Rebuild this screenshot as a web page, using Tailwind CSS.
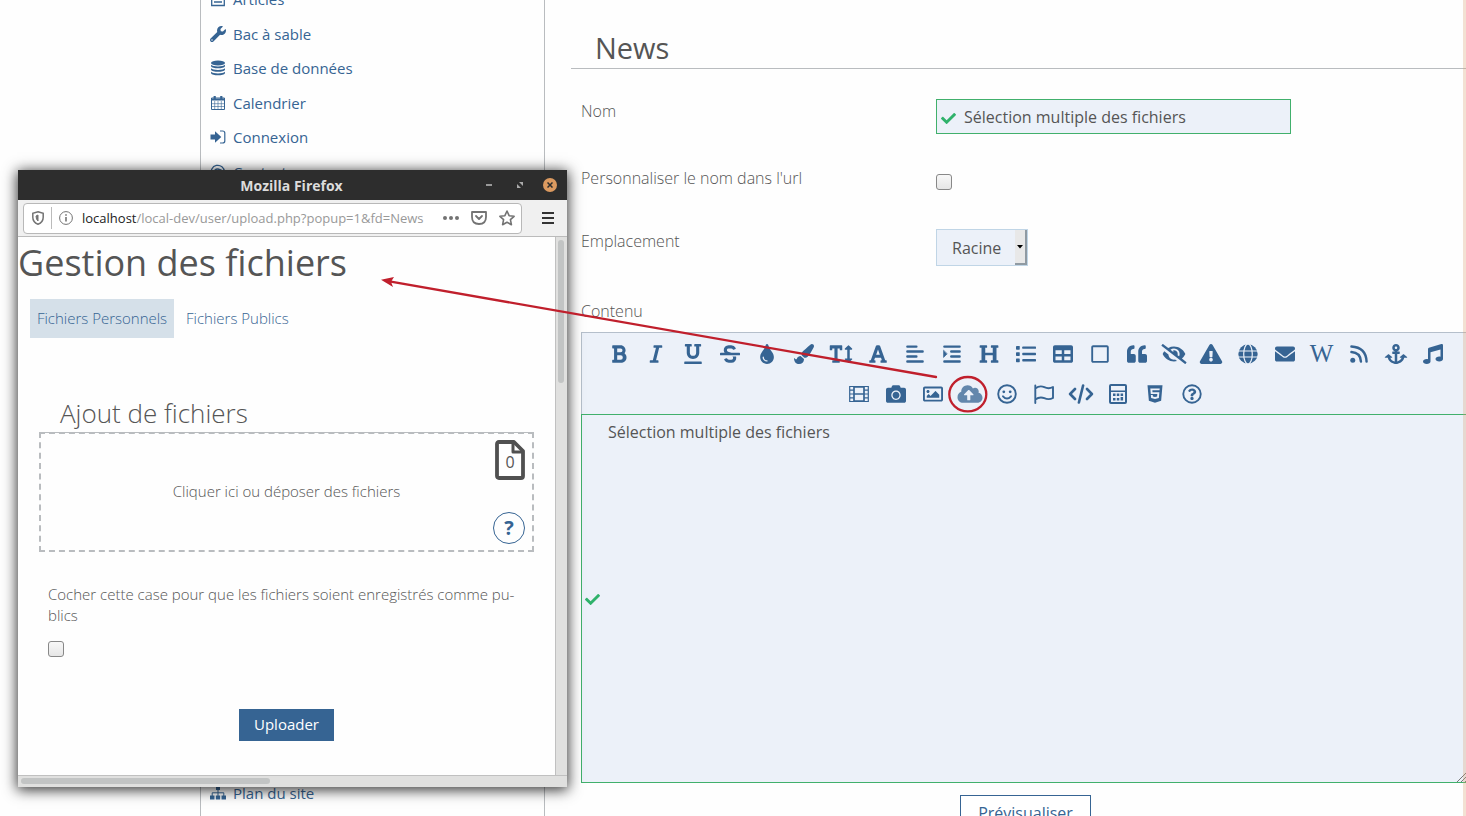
<!DOCTYPE html>
<html lang="fr">
<head>
<meta charset="utf-8">
<title>News</title>
<script src="https://cdn.jsdelivr.net/npm/@tailwindcss/browser@4"></script>
</head>
<body class="relative h-screen overflow-hidden bg-[#fefefe] font-['Open_Sans',sans-serif] text-[#555]">
<div class="flex h-full">
  <!-- Side menu -->
  <aside class="ml-[200px] flex w-[345px] shrink-0 flex-col justify-between border-x border-[#b9bcbf] text-[15px] text-[#366493]">
    <nav class="-mt-[18px] flex h-[207px] flex-col pl-[9px]">
      <a href="#" class="flex flex-1 items-center gap-[7px]"><svg class="size-4" viewBox="0 0 16 16" fill="none" stroke="currentColor" stroke-width="1.3"><path d="M1.7 1.5h12.6v13H1.7zM4 5h8M4 8h8M4 11h8"/></svg>Articles</a>
      <a href="#" class="flex flex-1 items-center gap-[7px]"><svg class="size-4" viewBox="0 0 512 512" fill="currentColor"><path d="M507.730 109.100c-2.240-9.030-13.540-12.090-20.120-5.510l-74.360 74.360-67.880-11.310-11.310-67.880 74.360-74.360c6.620-6.620 3.430-17.900-5.660-20.160-47.380-11.740-99.550.91-136.580 37.930-39.640 39.640-50.550 97.100-34.050 147.200L18.740 402.760c-24.990 24.990-24.990 65.510 0 90.500 24.990 24.990 65.510 24.990 90.500 0l213.210-213.210c50.120 16.710 107.470 5.680 147.370-34.220 37.070-37.070 49.700-89.320 37.910-136.730zM64 472c-13.250 0-24-10.750-24-24s10.750-24 24-24 24 10.750 24 24-10.750 24-24 24z"/></svg>Bac à sable</a>
      <a href="#" class="flex flex-1 items-center gap-[7px]"><svg class="size-4" viewBox="0 0 16 16" fill="currentColor"><ellipse cx="8" cy="3" rx="7" ry="2.500"/><path d="M1 4.800c2 2.200 12 2.200 14 0v1.500c-1 2.700-13 2.700-14 0zM1 8.300c2 2.200 12 2.200 14 0v1.500c-1 2.700-13 2.700-14 0zM1 11.800c2 2.200 12 2.200 14 0v1.500c-1 2.700-13 2.700-14 0z"/></svg>Base de données</a>
      <a href="#" class="flex flex-1 items-center gap-[7px]"><svg class="size-4" viewBox="0 0 16 16" fill="none" stroke="currentColor"><path d="M1.500 3h13v11.500h-13z"/><path stroke-width=".6" d="M1.500 8.700h13M1.500 11.500h13M4.700 6v8.500M8 6v8.500M11.300 6v8.500"/><path stroke-width="2.200" d="M1.500 4.500h13M4.700 1v4M11.300 1v4"/></svg>Calendrier</a>
      <a href="#" class="flex flex-1 items-center gap-[7px]"><svg class="size-4" viewBox="0 0 16 16" fill="currentColor"><path d="M.500 5.500H5V2.200L11.300 8 5 13.800v-3.300H.500z"/><path d="M10 2h2.500q2.300 0 2.300 2v8q0 2-2.300 2H10" fill="none" stroke="currentColor" stroke-width="1.200"/></svg>Connexion</a>
      <a href="#" class="flex flex-1 items-center gap-[7px]"><svg class="size-4" viewBox="0 0 16 16" fill="none" stroke="currentColor" stroke-width="1.300"><circle cx="7.500" cy="8" r="3"/><path d="M10.800 5v4.500q.3 1.800 2 1.500 1.600-.6 1.600-3A6.600 6.600 0 1 0 12 13"/></svg>Contact</a>
    </nav>
    <a href="#" class="mb-[13px] flex items-center gap-[7px] pl-[9px] leading-5"><svg class="size-4" viewBox="0 0 16 16" fill="currentColor"><path d="M6 1h4v4H6zM0 10.500h4.500v4H0zM5.800 10.500h4.400v4H5.800zM11.500 10.500H16v4h-4.500z"/><path d="M8 5v6M2.200 11V7.800h11.600V11" fill="none" stroke="currentColor"/></svg>Plan du site</a>
  </aside>

  <!-- News form -->
  <main class="-mr-1 ml-[26px] min-w-0 flex-1">
    <h1 class="h-[69px] border-b border-[#b9bcbf] pl-6 pt-7 text-[29px] leading-10">News</h1>
    <form class="pl-[10px] text-base">
      <div class="mt-[30px] flex">
        <label for="nom" class="w-[355px] font-light leading-6">Nom</label>
        <div class="relative w-[355px]">
          <input id="nom" type="text" value="Sélection multiple des fichiers" class="block h-[35px] w-full border border-[#41b06c] bg-[#ecf1f9] pl-[27px] outline-none">
          <svg class="absolute left-[5px] top-[12px] size-[15px] text-[#2fb26b]" viewBox="0 0 512 512" fill="currentColor"><path d="M173.898 439.404l-166.400-166.400c-9.997-9.997-9.997-26.206 0-36.204l36.203-36.204c9.997-9.998 26.207-9.998 36.204 0L192 312.690 432.095 72.596c9.997-9.997 26.207-9.997 36.204 0l36.203 36.204c9.997 9.997 9.997 26.206 0 36.204l-294.400 294.401c-9.998 9.997-26.207 9.997-36.204-.001z"/></svg>
        </div>
      </div>
      <div class="mt-8 flex">
        <label for="url" class="w-[355px] font-light leading-6">Personnaliser le nom dans l'url</label>
        <input id="url" type="checkbox" class="mt-2 size-4 appearance-none rounded-[3px] border border-[#888] bg-linear-to-b from-[#f8f8f8] to-[#e6e6e6]">
      </div>
      <div class="mt-[39px] flex">
        <label for="place" class="w-[355px] font-light leading-6">Emplacement</label>
        <div class="relative">
          <select id="place" class="block h-[37px] w-[92px] appearance-none border border-[#c0d5e6] bg-[#ecf1f9] pl-[15px]"><option>Racine</option></select>
          <span class="pointer-events-none absolute inset-y-px right-px flex w-3 items-center justify-center border-b-2 border-r-2 border-[#909aa2] bg-[#e8e8e8]"><svg class="h-1 w-2" viewBox="0 0 8 4"><path d="M1 0h6L4 3.500z"/></svg></span>
        </div>
      </div>
      <label for="contenu" class="mt-8 block h-[34px] pt-px font-light leading-6">Contenu</label>

      <div class="flex h-[82px] flex-col border border-b-0 border-[#b5bfcb] bg-[#ecf1f9] pt-px text-[#366493]">
        <div class="flex h-10 items-center justify-center">
          <button type="button" aria-label="Gras" class="flex w-[37px] shrink-0 justify-center"><svg class="h-5 w-7" viewBox="0 0 384 512" fill="currentColor"><path d="M333.490 238a122 122 0 0 0 27-65.210C367.870 96.490 308 32 233.420 32H34a16 16 0 0 0-16 16v48a16 16 0 0 0 16 16h31.870v288H34a16 16 0 0 0-16 16v48a16 16 0 0 0 16 16h209.320c70.800 0 134.140-51.750 141-122.400 4.740-48.450-16.390-92.060-50.830-119.600zM145.660 112h87.760a48 48 0 0 1 0 96h-87.760zm87.760 288h-87.760V288h87.760a56 56 0 0 1 0 112z"/></svg></button>
          <button type="button" aria-label="Italique" class="flex w-[37px] shrink-0 justify-center"><svg class="h-5 w-7" viewBox="0 0 320 512" fill="currentColor"><path d="M320 48v32a16 16 0 0 1-16 16h-62.760l-80 320H208a16 16 0 0 1 16 16v32a16 16 0 0 1-16 16H16a16 16 0 0 1-16-16v-32a16 16 0 0 1 16-16h62.760l80-320H112a16 16 0 0 1-16-16V48a16 16 0 0 1 16-16h192a16 16 0 0 1 16 16z"/></svg></button>
          <button type="button" aria-label="Souligné" class="flex w-[37px] shrink-0 justify-center"><svg class="h-5 w-7" viewBox="0 0 448 512" fill="currentColor"><path d="M32 64h32v160c0 88.220 71.780 160 160 160s160-71.780 160-160V64h32a16 16 0 0 0 16-16V16a16 16 0 0 0-16-16H272a16 16 0 0 0-16 16v32a16 16 0 0 0 16 16h32v160a80 80 0 0 1-160 0V64h32a16 16 0 0 0 16-16V16a16 16 0 0 0-16-16H32a16 16 0 0 0-16 16v32a16 16 0 0 0 16 16zm400 384H16a16 16 0 0 0-16 16v32a16 16 0 0 0 16 16h416a16 16 0 0 0 16-16v-32a16 16 0 0 0-16-16z"/></svg></button>
          <button type="button" aria-label="Barré" class="flex w-[37px] shrink-0 justify-center"><svg class="h-5 w-7" viewBox="0 0 512 512" fill="currentColor"><path d="M496 224H293.900l-87.170-26.830A43.550 43.550 0 0 1 219.550 112h66.790A49.890 49.890 0 0 1 331 139.580a16 16 0 0 0 21.460 7.150l42.940-21.470a16 16 0 0 0 7.160-21.460l-.53-1A128 128 0 0 0 287.510 32h-68a123.680 123.680 0 0 0-123 135.640c2 20.890 10.100 39.830 21.780 56.360H16a16 16 0 0 0-16 16v32a16 16 0 0 0 16 16h480a16 16 0 0 0 16-16v-32a16 16 0 0 0-16-16zm-180.240 96A43 43 0 0 1 336 356.450 43.590 43.590 0 0 1 292.450 400h-66.790A49.890 49.890 0 0 1 181 372.420a16 16 0 0 0-21.460-7.150l-42.940 21.470a16 16 0 0 0-7.160 21.460l.53 1A128 128 0 0 0 224.490 480h68a123.680 123.680 0 0 0 123-135.640 114.250 114.250 0 0 0-5.340-24.360z"/></svg></button>
          <button type="button" aria-label="Couleur" class="flex w-[37px] shrink-0 justify-center"><svg class="h-5 w-7" viewBox="0 0 352 512" fill="currentColor"><path d="M205.220 22.090c-7.940-28.780-49.440-30.120-58.440 0C100.010 179.850 0 222.720 0 333.910 0 432.350 78.720 512 176 512s176-79.650 176-178.090c0-111.750-99.790-153.340-146.780-311.820zM176 448c-61.750 0-112-50.250-112-112 0-8.840 7.160-16 16-16s16 7.160 16 16c0 44.110 35.890 80 80 80 8.840 0 16 7.160 16 16s-7.160 16-16 16z"/></svg></button>
          <button type="button" aria-label="Couleur de fond" class="flex w-[37px] shrink-0 justify-center"><svg class="h-5 w-7" viewBox="0 0 512 512" fill="currentColor"><path d="M167.020 309.340c-40.120 2.580-76.530 17.860-97.190 72.300-2.350 6.210-8 9.980-14.590 9.980-11.110 0-45.460-27.670-55.250-34.350C0 439.620 37.930 512 128 512c75.860 0 128-43.770 128-120.190 0-3.110-.65-6.080-.97-9.130l-88.010-73.340zM457.890 0c-15.160 0-29.370 6.710-40.210 16.450C213.270 199.050 192 203.340 192 257.090c0 13.700 3.250 26.760 8.730 38.700l63.820 53.180c7.210 1.800 14.640 3.030 22.390 3.030 62.110 0 98.110-45.470 211.160-256.460 7.380-14.350 13.900-29.850 13.900-45.990C512 20.640 486 0 457.890 0z"/></svg></button>
          <button type="button" aria-label="Taille du texte" class="flex w-[37px] shrink-0 justify-center"><svg class="h-5 w-7" viewBox="0 0 576 512" fill="currentColor"><path d="M304 32H16A16 16 0 0 0 0 48v96a16 16 0 0 0 16 16h32a16 16 0 0 0 16-16v-32h56v304H80a16 16 0 0 0-16 16v32a16 16 0 0 0 16 16h160a16 16 0 0 0 16-16v-32a16 16 0 0 0-16-16h-40V112h56v32a16 16 0 0 0 16 16h32a16 16 0 0 0 16-16V48a16 16 0 0 0-16-16zm256 336h-48V144h48c14.310 0 21.330-17.310 11.310-27.310l-80-80a16 16 0 0 0-22.620 0l-80 80C379.360 126 384.360 144 400 144h48v224h-48c-14.310 0-21.320 17.310-11.310 27.310l80 80a16 16 0 0 0 22.620 0l80-80C580.640 386 575.640 368 560 368z"/></svg></button>
          <button type="button" aria-label="Police" class="flex w-[37px] shrink-0 justify-center"><svg class="h-5 w-7" viewBox="0 0 448 512" fill="currentColor"><path d="M432 416h-23.410L277.880 53.690A32 32 0 0 0 247.580 32h-47.160a32 32 0 0 0-30.300 21.690L39.410 416H16a16 16 0 0 0-16 16v32a16 16 0 0 0 16 16h128a16 16 0 0 0 16-16v-32a16 16 0 0 0-16-16h-19.580l23.300-64h152.560l23.300 64H304a16 16 0 0 0-16 16v32a16 16 0 0 0 16 16h128a16 16 0 0 0 16-16v-32a16 16 0 0 0-16-16zM176.850 272L224 142.510 271.150 272z"/></svg></button>
          <button type="button" aria-label="Alignement" class="flex w-[37px] shrink-0 justify-center"><svg class="h-5 w-7" viewBox="0 0 448 512" fill="none" stroke="currentColor" stroke-width="60" stroke-linecap="round"><path d="M28 66h232M28 192h392M28 320h232M28 448h392"/></svg></button>
          <button type="button" aria-label="Retrait" class="flex w-[37px] shrink-0 justify-center"><svg class="h-5 w-7" viewBox="0 0 448 512" fill="none" stroke="currentColor" stroke-width="60" stroke-linecap="round"><path d="M28 66h392M204 192h216M204 320h216M28 448h392"/><path d="M8 168v176l88-88z" stroke-width="16" stroke-linejoin="round" fill="currentColor"/></svg></button>
          <button type="button" aria-label="Titre" class="flex w-[37px] shrink-0 justify-center"><svg class="h-5 w-7" viewBox="0 0 512 512" fill="currentColor"><path d="M448 96v320h32a16 16 0 0 1 16 16v32a16 16 0 0 1-16 16H320a16 16 0 0 1-16-16v-32a16 16 0 0 1 16-16h32V288H160v128h32a16 16 0 0 1 16 16v32a16 16 0 0 1-16 16H32a16 16 0 0 1-16-16v-32a16 16 0 0 1 16-16h32V96H32a16 16 0 0 1-16-16V48a16 16 0 0 1 16-16h160a16 16 0 0 1 16 16v32a16 16 0 0 1-16 16h-32v128h192V96h-32a16 16 0 0 1-16-16V48a16 16 0 0 1 16-16h160a16 16 0 0 1 16 16v32a16 16 0 0 1-16 16z"/></svg></button>
          <button type="button" aria-label="Liste" class="flex w-[37px] shrink-0 justify-center"><svg class="h-5 w-7" viewBox="0 0 512 512" fill="currentColor"><rect y="48" width="96" height="96" rx="16"/><rect y="208" width="96" height="96" rx="16"/><rect y="368" width="96" height="96" rx="16"/><rect x="160" y="64" width="352" height="60" rx="16"/><rect x="160" y="226" width="352" height="60" rx="16"/><rect x="160" y="386" width="352" height="60" rx="16"/></svg></button>
          <button type="button" aria-label="Tableau" class="flex w-[37px] shrink-0 justify-center"><svg class="h-5 w-7" viewBox="0 0 512 512" fill="currentColor"><path d="M464 32H48C21.490 32 0 53.490 0 80v352c0 26.510 21.490 48 48 48h416c26.510 0 48-21.490 48-48V80c0-26.510-21.490-48-48-48zM224 416H64v-96h160v96zm0-160H64v-96h160v96zm224 160H288v-96h160v96zm0-160H288v-96h160v96z"/></svg></button>
          <button type="button" aria-label="Bloc" class="flex w-[37px] shrink-0 justify-center"><svg class="h-5 w-7" viewBox="0 0 448 512" fill="currentColor"><path d="M400 32H48C21.500 32 0 53.500 0 80v352c0 26.500 21.500 48 48 48h352c26.500 0 48-21.500 48-48V80c0-26.500-21.500-48-48-48zm-6 400H54c-3.300 0-6-2.700-6-6V86c0-3.300 2.700-6 6-6h340c3.300 0 6 2.700 6 6v340c0 3.300-2.700 6-6 6z"/></svg></button>
          <button type="button" aria-label="Citation" class="flex w-[37px] shrink-0 justify-center"><svg class="h-5 w-7" viewBox="0 0 512 512" fill="currentColor"><path d="M464 256h-80v-64c0-35.300 28.700-64 64-64h8c13.300 0 24-10.700 24-24V56c0-13.300-10.700-24-24-24h-8c-88.400 0-160 71.600-160 160v240c0 26.500 21.500 48 48 48h128c26.500 0 48-21.500 48-48V304c0-26.500-21.500-48-48-48zm-288 0H96v-64c0-35.300 28.700-64 64-64h8c13.300 0 24-10.700 24-24V56c0-13.300-10.700-24-24-24h-8C71.600 32 0 103.600 0 192v240c0 26.500 21.500 48 48 48h128c26.500 0 48-21.500 48-48V304c0-26.500-21.500-48-48-48z"/></svg></button>
          <button type="button" aria-label="Masquer" class="flex w-[37px] shrink-0 justify-center"><svg class="h-5 w-7" viewBox="0 0 640 512" fill="currentColor"><path d="M320 400c-75.850 0-137.250-58.710-142.900-133.110L72.200 185.820c-13.790 17.300-26.480 35.590-36.720 55.590a32.350 32.350 0 0 0 0 29.190C89.710 376.410 197.070 448 320 448c26.910 0 52.870-4 77.890-10.460L346 397.390a144.130 144.130 0 0 1-26 2.610zm313.820 58.100l-110.550-85.440a331.250 331.250 0 0 0 81.250-102.070 32.350 32.350 0 0 0 0-29.190C550.290 135.590 442.930 64 320 64a308.150 308.150 0 0 0-147.320 37.700L45.460 3.370A16 16 0 0 0 23 6.180L3.370 31.450A16 16 0 0 0 6.180 53.900l588.360 454.730a16 16 0 0 0 22.460-2.810l19.640-25.270a16 16 0 0 0-2.820-22.450zm-183.720-142l-39.300-30.380A94.750 94.750 0 0 0 416 256a94.760 94.760 0 0 0-121.310-92.210A47.650 47.650 0 0 1 304 192a46.640 46.640 0 0 1-1.540 10l-73.610-56.890A142.310 142.310 0 0 1 320 112a143.920 143.920 0 0 1 144 144c0 21.630-5.290 41.790-13.900 60.110z"/></svg></button>
          <button type="button" aria-label="Avertissement" class="flex w-[37px] shrink-0 justify-center"><svg class="h-5 w-7" viewBox="0 0 576 512" fill="currentColor"><path d="M569.517 440.013C587.975 472.007 564.806 512 527.940 512H48.054c-36.937 0-59.999-40.055-41.577-71.987L246.423 23.985c18.467-32.009 64.720-31.951 83.154 0l239.940 416.028zM288 354c-25.405 0-46 20.595-46 46s20.595 46 46 46 46-20.595 46-46-20.595-46-46-46zm-43.673-165.346l7.418 136c.347 6.364 5.609 11.346 11.982 11.346h48.546c6.373 0 11.635-4.982 11.982-11.346l7.418-136c.375-6.874-5.098-12.654-11.982-12.654h-63.383c-6.884 0-12.356 5.780-11.981 12.654z"/></svg></button>
          <button type="button" aria-label="Lien" class="flex w-[37px] shrink-0 justify-center"><svg class="h-5 w-7" viewBox="0 0 20 20"><circle cx="10" cy="10" r="9.700" fill="currentColor"/><g fill="none" stroke="#ecf1f9" stroke-width="1.200"><ellipse cx="10" cy="10" rx="4.300" ry="10"/><path d="M0 7h20M0 13h20"/></g></svg></button>
          <button type="button" aria-label="Courriel" class="flex w-[37px] shrink-0 justify-center"><svg class="h-5 w-7" viewBox="0 0 512 512" fill="currentColor"><path d="M502.300 190.800c3.900-3.100 9.700-.2 9.700 4.700V400c0 26.500-21.500 48-48 48H48c-26.500 0-48-21.500-48-48V195.600c0-5 5.700-7.800 9.700-4.700 22.400 17.400 52.100 39.500 154.100 113.600 21.100 15.400 56.700 47.800 92.200 47.600 35.700.3 72-32.800 92.300-47.600 102-74.100 131.600-96.300 154-113.700zM256 320c23.200.4 56.600-29.200 73.400-41.400 132.700-96.300 142.800-104.700 173.400-128.700 5.800-4.500 9.200-11.500 9.200-18.900v-19c0-26.500-21.500-48-48-48H48c-26.500 0-48 21.500-48 48v19c0 7.400 3.400 14.300 9.200 18.900 30.600 23.900 40.700 32.400 173.400 128.700 16.800 12.200 50.200 41.800 73.400 41.400z"/></svg></button>
          <button type="button" aria-label="Wikipédia" class="flex w-[37px] shrink-0 justify-center font-['Liberation_Serif',serif] text-[25px] leading-5">W</button>
          <button type="button" aria-label="Flux RSS" class="flex w-[37px] shrink-0 justify-center"><svg class="h-5 w-7" viewBox="0 0 448 512" fill="none" stroke="currentColor" stroke-width="62" stroke-linecap="round"><circle cx="64" cy="416" r="64" fill="currentColor" stroke="none"/><path d="M30 206q230 14 244 244M30 64q370 20 388 386"/></svg></button>
          <button type="button" aria-label="Ancre" class="flex w-[37px] shrink-0 justify-center"><svg class="h-5 w-7" viewBox="-32 0 576 512" fill="currentColor"><path d="M-19 352h64.365C67.172 454.735 181.944 512 256 512c74.229 0 188.982-57.437 210.635-160H531c10.691 0 16.045-12.926 8.485-20.485l-83-67.029c-4.686-4.686-12.284-4.686-16.971 0l-83 67.029c-7.560 7.560-2.206 20.485 8.485 20.485h35.146c-20.290 54.317-84.963 86.588-112 94.015V256h52c6.627 0 12-5.373 12-12v-40c0-6.627-5.373-12-12-12h-52v-5.470c37.281-13.226 63.995-48.770 64-90.530C352 42.870 308.900 0 256 0s-96 42.870-96 96c0 41.760 26.700 77.300 64 90.530V192h-52c-6.627 0-12 5.373-12 12v40c0 6.627 5.373 12 12 12h52v190.015c-58.936-7.399-95-39.679-112-94.015h35.146c10.691 0 16.045-12.926 8.485-20.485l-83-67.029c-4.686-4.686-12.284-4.686-16.971 0L-27.500 331.515C-35.074 339.074-29.700 352-19 352zM256 64c17.645 0 32 14.355 32 32s-14.355 32-32 32-32-14.355-32-32 14.355-32 32-32z"/></svg></button>
          <button type="button" aria-label="Son" class="flex w-[37px] shrink-0 justify-center"><svg class="h-5 w-7" viewBox="0 0 512 512" fill="currentColor"><path d="M511.990 32.010c0-21.710-21.100-37.010-41.600-30.510L150.400 96c-13.300 4.200-22.400 16.500-22.400 30.500v261.420c-10.050-2.380-20.720-3.920-32-3.920-53.020 0-96 28.650-96 64s42.980 64 96 64 96-28.650 96-64V214.310l256-75.020v184.630c-10.050-2.380-20.720-3.920-32-3.920-53.020 0-96 28.650-96 64s42.980 64 96 64 96-28.650 96-64l-.01-351.990z"/></svg></button>
        </div>
        <div class="flex h-10 items-center justify-center">
          <button type="button" aria-label="Vidéo" class="flex w-[37px] shrink-0 justify-center"><svg class="h-5 w-7" viewBox="0 0 20 20" fill="none" stroke="currentColor"><path stroke-width="1.700" d="M5 3h10v14H5zM5 10h10"/><path stroke-width="1.200" d="M.7 2.500h18.600v15H.7zM.7 6.200H5M.7 10H5M.7 13.800H5M15 6.200h4.300M15 10h4.300M15 13.800h4.300"/></svg></button>
          <button type="button" aria-label="Photo" class="flex w-[37px] shrink-0 justify-center"><svg class="h-5 w-7" viewBox="0 0 512 512" fill="currentColor"><path d="M512 144v288c0 26.500-21.500 48-48 48H48c-26.500 0-48-21.500-48-48V144c0-26.500 21.500-48 48-48h88l12.300-32.900c7-18.700 24.900-31.100 44.900-31.100h125.500c20 0 37.900 12.400 44.900 31.100L376 96h88c26.500 0 48 21.500 48 48zM376 288c0-66.200-53.800-120-120-120s-120 53.800-120 120 53.800 120 120 120 120-53.800 120-120zm-32 0c0 48.500-39.500 88-88 88s-88-39.500-88-88 39.500-88 88-88 88 39.500 88 88z"/></svg></button>
          <button type="button" aria-label="Image" class="flex w-[37px] shrink-0 justify-center"><svg class="h-5 w-7" viewBox="0 0 512 512" fill="currentColor"><path d="M464 64H48C21.490 64 0 85.490 0 112v288c0 26.510 21.490 48 48 48h416c26.510 0 48-21.490 48-48V112c0-26.510-21.490-48-48-48zm-6 336H54a6 6 0 0 1-6-6V118a6 6 0 0 1 6-6h404a6 6 0 0 1 6 6v276a6 6 0 0 1-6 6zM128 152c-22.091 0-40 17.909-40 40s17.909 40 40 40 40-17.909 40-40-17.909-40-40-40zM96 352h320v-80l-87.515-87.515c-4.686-4.686-12.284-4.686-16.971 0L192 304l-39.515-39.515c-4.686-4.686-12.284-4.686-16.971 0L96 304v48z"/></svg></button>
          <button type="button" aria-label="Envoyer des fichiers" class="flex w-[37px] shrink-0 justify-center"><svg class="h-5 w-7 opacity-75" viewBox="0 0 640 512" fill="currentColor"><path d="M537.600 226.600c4.100-10.700 6.400-22.400 6.400-34.600 0-53-43-96-96-96-19.700 0-38.100 6-53.300 16.200C367 64.200 315.300 32 256 32c-88.400 0-160 71.600-160 160 0 2.700.1 5.400.2 8.100C40.200 219.800 0 273.200 0 336c0 79.500 64.500 144 144 144h368c70.700 0 128-57.300 128-128 0-61.900-44-113.600-102.400-125.400zM393.400 288H328v112c0 8.800-7.200 16-16 16h-48c-8.800 0-16-7.200-16-16V288h-65.400c-14.300 0-21.400-17.200-11.300-27.300l105.400-105.400c6.200-6.200 16.400-6.200 22.600 0l105.400 105.400c10.100 10.100 2.900 27.300-11.300 27.300z"/></svg></button>
          <button type="button" aria-label="Émoticône" class="flex w-[37px] shrink-0 justify-center"><svg class="h-5 w-7" viewBox="0 0 20 20" fill="none" stroke="currentColor" stroke-width="1.900" stroke-linecap="round"><circle cx="10" cy="10" r="8.800"/><path d="M6 12.300q4 4.400 8 0"/><g fill="currentColor" stroke="none"><circle cx="6.800" cy="7.800" r="1.400"/><circle cx="13.200" cy="7.800" r="1.400"/></g></svg></button>
          <button type="button" aria-label="Drapeau" class="flex w-[37px] shrink-0 justify-center"><svg class="h-5 w-7" viewBox="0 0 20 20" fill="none" stroke="currentColor" stroke-width="1.900" stroke-linecap="round" stroke-linejoin="round"><path d="M1.300 1.500v17.500M1.300 4.500q4.500-3.500 9-1.300t8.700-.2v11q-4.200 2.200-8.700.2t-9 1.300"/></svg></button>
          <button type="button" aria-label="Code" class="flex w-[37px] shrink-0 justify-center"><svg class="h-5 w-7" viewBox="0 0 25 20" fill="none" stroke="currentColor" stroke-width="2.600" stroke-linejoin="round" stroke-linecap="round"><path d="M6.500 5L1.600 10l4.900 5M18.500 5l4.900 5-4.900 5M14.600 1.500l-4.200 17"/></svg></button>
          <button type="button" aria-label="Calcul" class="flex w-[37px] shrink-0 justify-center"><svg class="h-5 w-7" viewBox="0 0 18 20" fill="currentColor"><path fill-rule="evenodd" d="M2 0h14q2 0 2 2v16q0 2-2 2H2q-2 0-2-2V2Q0 0 2 0zm0 2v4.500h14V2zm0 6v10h14V8z"/><path d="M4 9.500h2.500V12H4zM7.800 9.500h2.500V12H7.800zM11.600 9.500h2.500V12h-2.500zM4 14h2.500v2.500H4zM7.800 14h2.500v2.500H7.800zM11.600 13h2.500v3.500h-2.500z"/></svg></button>
          <button type="button" aria-label="HTML" class="flex w-[37px] shrink-0 justify-center"><svg class="h-5 w-7" viewBox="0 0 384 512" fill="currentColor"><path d="M0 32l34.900 395.800L191.500 480l157.600-52.200L384 32H0zm308.200 127.900H124.400l4.100 49.400h175.600l-13.600 148.400-97.900 27v.3h-1.100l-98.700-27.300-6-75.800h47.700L138 320l53.500 14.500 53.700-14.500 6-62.200H84.300L71.500 112.200h241.100l-4.400 47.700z"/></svg></button>
          <button type="button" aria-label="Aide" class="flex w-[37px] shrink-0 justify-center"><svg class="h-5 w-7" viewBox="0 0 512 512" fill="currentColor"><circle cx="256" cy="256" r="224" fill="none" stroke="currentColor" stroke-width="48"/><path d="M363.244 200.800c0 67.052-72.421 68.084-72.421 92.863V300c0 6.627-5.373 12-12 12h-45.647c-6.627 0-12-5.373-12-12v-8.659c0-35.745 27.100-50.034 47.579-61.516 17.561-9.845 28.324-16.541 28.324-29.579 0-17.246-21.999-28.693-39.784-28.693-23.189 0-33.894 10.977-48.942 29.969-4.057 5.120-11.460 6.071-16.666 2.124l-27.824-21.098c-5.107-3.872-6.251-11.066-2.644-16.363C184.846 131.491 214.940 112 261.794 112c49.071 0 101.450 38.304 101.450 88.800zM298 368c0 23.159-18.841 42-42 42s-42-18.841-42-42 18.841-42 42-42 42 18.841 42 42z"/></svg></button>
        </div>
      </div>
      <div class="relative">
        <textarea id="contenu" class="block h-[369px] w-full resize-none border border-[#41b06c] bg-[#ecf1f9] px-[26px] py-[6px] leading-[22px] outline-none">Sélection multiple des fichiers</textarea>
        <svg class="absolute left-[4px] top-[178px] size-[15px] text-[#2fb26b]" viewBox="0 0 512 512" fill="currentColor"><path d="M173.898 439.404l-166.400-166.400c-9.997-9.997-9.997-26.206 0-36.204l36.203-36.204c9.997-9.998 26.207-9.998 36.204 0L192 312.690 432.095 72.596c9.997-9.997 26.207-9.997 36.204 0l36.203 36.204c9.997 9.997 9.997 26.206 0 36.204l-294.400 294.401c-9.998 9.997-26.207 9.997-36.204-.001z"/></svg>
        <svg class="absolute bottom-px right-px size-3" viewBox="0 0 12 12" stroke="#777" stroke-width="1"><path d="M0 12L12 0M4 12l8-8M8 12l4-4"/></svg>
      </div>
      <button type="button" class="mx-auto mt-3 block h-9 w-[131px] border border-[#366493] bg-white text-[#366493]">Prévisualiser</button>
    </form>
  </main>
</div>
<div class="pointer-events-none absolute inset-y-0 right-0 w-[3px] bg-[#d9a070]/30"></div>

<!-- Upload popup window -->
<section class="absolute left-[18px] top-[170px] flex h-[617px] w-[549px] flex-col bg-[#fefefe] shadow-[0_2px_13px_1px_rgba(0,0,0,0.8)]">
  <header class="flex h-[30px] shrink-0 items-center bg-[#2d2d2d] pr-[10px] text-[#dcdcdc]">
    <h2 class="flex-1 pl-[84px] pt-px text-center text-sm font-bold">Mozilla Firefox</h2>
    <div class="flex items-center gap-[15px]">
      <button type="button" aria-label="Réduire" class="flex size-4 items-center justify-center"><span class="h-[2px] w-[6px] bg-[#999]"></span></button>
      <button type="button" aria-label="Agrandir" class="flex size-4 items-center justify-center"><svg class="size-[6px]" viewBox="0 0 6 6" fill="#aaa"><path d="M2 0h4v4zM0 2v4h4z"/></svg></button>
      <button type="button" aria-label="Fermer" class="flex size-[14px] items-center justify-center rounded-full bg-[#dc9a60]"><svg class="size-[6px]" viewBox="0 0 6 6" stroke="#2d2d2d" stroke-width="1.500"><path d="M.5.500l5 5M5.500.500l-5 5"/></svg></button>
    </div>
  </header>
  <div class="flex h-[37px] shrink-0 items-center border-b border-[#bbb] bg-[#f0f0f0] pl-[5px] pr-3">
    <div class="flex h-[31px] w-[499px] items-center rounded-[4px] border border-[#b8b8b8] bg-white pl-2 pr-[6px] text-[#737373]">
      <svg class="h-[14px] w-3 shrink-0" viewBox="0 0 12 14" fill="none" stroke="currentColor" stroke-width="1.500"><path d="M6 .8l5.200 1.400v4q0 5-5.200 7-5.200-2-5.200-7v-4z"/><path d="M6 4v6q-2-1.500-2-5z" fill="currentColor" stroke-width="1"/></svg>
      <span class="mx-[7px] h-[22px] w-px bg-[#bbb]"></span>
      <svg class="size-[14px] shrink-0" viewBox="0 0 14 14" fill="none" stroke="currentColor"><circle cx="7" cy="7" r="6.400"/><path d="M7 6v4.500M7 3.200v1.600" stroke-width="1.600"/></svg>
      <div class="ml-[9px] flex-1 whitespace-nowrap pt-[2px] text-[13px] text-[#999]"><span class="text-[#222]">localhost</span>/local-dev/user/upload.php?popup=1&amp;fd=News</div>
      <svg class="h-1 w-4 shrink-0" viewBox="0 0 16 4" fill="currentColor"><circle cx="2" cy="2" r="2"/><circle cx="8" cy="2" r="2"/><circle cx="14" cy="2" r="2"/></svg>
      <svg class="ml-3 h-[14px] w-4 shrink-0" viewBox="0 0 16 14" fill="none" stroke="currentColor" stroke-width="1.800" stroke-linejoin="round" stroke-linecap="round"><path d="M1 1h14v5q0 7-7 7T1 6z"/><path d="M5 5l3 3 3-3"/></svg>
      <svg class="ml-3 size-4 shrink-0" viewBox="0 0 16 16" fill="none" stroke="currentColor" stroke-width="1.600" stroke-linejoin="round"><path d="M8 1l2.100 4.700 5 .6-3.700 3.400 1 5L8 12.200l-4.400 2.500 1-5L.9 6.300l5-.6z"/></svg>
    </div>
    <button type="button" aria-label="Menu" class="ml-auto mr-px"><svg class="h-3 w-3" viewBox="0 0 12 12" fill="#333"><path d="M0 0h12v2H0zM0 5h12v2H0zM0 10h12v2H0z"/></svg></button>
  </div>
  <div class="flex min-h-0 flex-1">
    <div class="min-w-0 flex-1">
      <h1 class="pt-px text-[36px] leading-[50px]">Gestion des fichiers</h1>
      <nav class="ml-3 mt-[11px] flex text-[15px] font-light leading-[39px] text-[#366493]">
        <a href="#" class="w-36 bg-[#d5e0e9] text-center">Fichiers Personnels</a>
        <a href="#" class="pl-3">Fichiers Publics</a>
      </nav>
      <h2 class="mx-[21px] mt-[60px] h-[35px] border-b border-[#b9bcbf] pl-[21px] text-[26px] font-light leading-[30px]">Ajout de fichiers</h2>
      <div class="relative -mt-px mx-[21px] flex h-[120px] items-center justify-center border-2 border-dashed border-[#b9bcbf] text-[15px] font-light">
        <button type="button" class="pb-[2px]">Cliquer ici ou déposer des fichiers</button>
        <div class="absolute right-[7px] top-[6px] flex h-10 w-[30px] items-center justify-center pt-1 text-base">
          <svg class="absolute inset-0 h-10 w-[30px]" viewBox="0 0 30 40" fill="none" stroke="#505050" stroke-width="3.800" stroke-linejoin="round"><path d="M4 2h15l9 9v25q0 2-2 2H4q-2 0-2-2V4q0-2 2-2z"/><path d="M18 2v10h10" stroke-width="3"/></svg>
          <span class="relative font-normal">0</span>
        </div>
        <button type="button" aria-label="Aide" class="absolute bottom-[6px] right-[7px] flex size-8 items-center justify-center rounded-full border border-[#366493] text-xl font-bold text-[#366493]">?</button>
      </div>
      <div class="ml-[30px] mt-8 text-[15px] font-light leading-[21px]">
        <label for="public" class="block">Cocher cette case pour que les fichiers soient enregistrés comme pu-<br>blics</label>
        <input id="public" type="checkbox" class="mt-[15px] block size-4 appearance-none rounded-[3px] border border-[#888] bg-linear-to-b from-[#f8f8f8] to-[#e6e6e6]">
      </div>
      <button type="button" class="mx-auto mt-[52px] block h-8 w-[95px] bg-[#366493] pb-px text-[15px] text-white">Uploader</button>
    </div>
    <div class="w-3 shrink-0 border-l border-[#c0c0c0] bg-[#e0e0df] pl-[2px] pt-[3px]"><div class="h-[143px] w-[6px] rounded-full bg-[#c2c4c4]"></div></div>
  </div>
  <div class="h-3 shrink-0 border-t border-[#c0c0c0] bg-[#e0e0df] pl-[3px] pt-[2px]"><div class="h-[6px] w-[249px] rounded-full bg-[#c2c4c4]"></div></div>
</section>

<!-- Arrow and circle annotations -->
<svg class="pointer-events-none absolute left-0 top-0 h-[816px] w-[1466px]" viewBox="0 0 1466 816" fill="none" stroke="#c01f2c" stroke-width="2.300">
  <path d="M936 377L388 281.200" stroke-linecap="round"/>
  <path d="M381 279.800l13-2.800-3 4.700 2 5.300z" fill="#c01f2c" stroke="none"/>
  <ellipse cx="967.800" cy="394.200" rx="18.500" ry="17.200"/>
</svg>
</body>
</html>
